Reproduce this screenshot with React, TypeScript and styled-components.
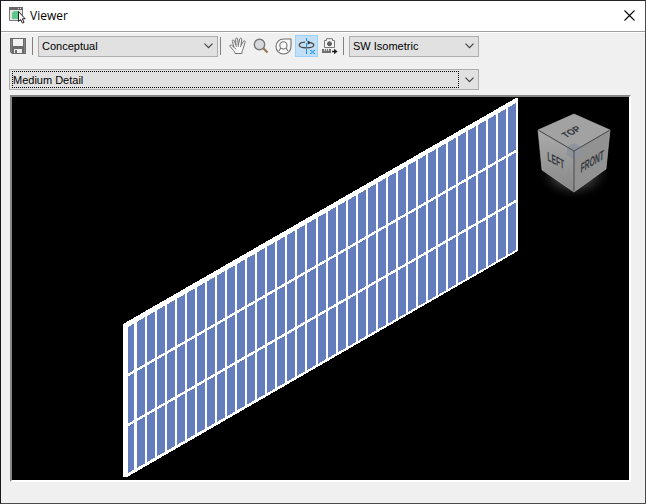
import React from "react";
import styled, { createGlobalStyle } from "styled-components";

const GlobalStyle = createGlobalStyle`
  * { box-sizing: border-box; }
  body { margin: 0; background: #f0f0f0; color: #000; font-family: "Liberation Sans", Arial, sans-serif; font-size: 11px; }
  svg { display: block; }
`;

const Window = styled.main`
  display: flex;
  flex-direction: column;
  min-height: 100vh;
  border: 1px solid #4c4a4d;
  border-left-color: #1b1718;
  border-top-color: #252329;
  background: #f0f0f0;
`;

const TitleBar = styled.header`
  display: flex;
  align-items: center;
  gap: 4px;
  height: 31px;
  padding-left: 8px;
  background: #fff;
  border-bottom: 1px solid #a0a0a0;
  box-shadow: 0 1px 0 #fff;
`;

const Title = styled.h1`
  flex: 1;
  margin: 0;
  font: 400 12px/16px "Open Sans", "Noto Sans", sans-serif;
`;

const CloseButton = styled.button`
  display: grid;
  place-items: center;
  width: 31px;
  height: 28px;
  margin-bottom: 2px;
  padding: 0;
  border: 0;
  background: transparent;
`;

const Toolbar = styled.div`
  display: flex;
  align-items: center;
  margin: 3px 0 0 5px;
  height: 22px;
`;

const ToolButton = styled.button<{ $active?: boolean }>`
  display: grid;
  place-items: center;
  flex: none;
  width: 23px;
  height: 22px;
  padding: 0;
  border: 1px solid ${(p) => (p.$active ? "#99d1ff" : "transparent")};
  background: ${(p) => (p.$active ? "#c2dff5" : "transparent")};
`;

const Separator = styled.span<{ $lead: number }>`
  flex: none;
  width: 1px;
  height: 18px;
  margin: 0 5px 0 ${(p) => p.$lead}px;
  background: #808080;
`;

const ViewTools = styled.div`
  display: flex;
`;

const Combo = styled.div<{ $width: number; $focused?: boolean }>`
  display: grid;
  align-items: center;
  width: ${(p) => p.$width}px;
  max-width: 100%;
  height: 21px;
  border: 1px solid #adadad;
  background: #e1e1e1;

  & > * { grid-area: 1 / 1; }

  &::after {
    content: "";
    grid-area: 1 / 1;
    display: ${(p) => (p.$focused ? "block" : "none")};
    height: 15px;
    margin: 0 19px 0 2px;
    border: 1px dotted #000;
    pointer-events: none;
  }
`;

const Select = styled.select`
  appearance: none;
  width: 100%;
  height: 19px;
  padding: 0 20px 0 3px;
  border: 0;
  outline: 0;
  background: transparent;
  color: #000;
  font: 11px "Liberation Sans", Arial, sans-serif;
`;

const Chevron = styled.svg`
  justify-self: end;
  margin-right: 4px;
  pointer-events: none;
`;

const DetailRow = styled.div`
  display: flex;
  margin: 12px 8px 0;
`;

const Viewport = styled.section`
  position: relative;
  flex: 1;
  display: grid;
  margin: 5px 14px 21px 9px;
  border: 2px solid;
  border-color: #868686 #fff #fff #868686;
  background: #000;
  overflow: hidden;
`;

const Scene = styled.svg`
  width: 100%;
  height: 100%;
`;

const ViewCube = styled.svg`
  position: absolute;
  top: 12px;
  right: 8px;
`;

function Dropdown({ label, width, value, options, focused }: {
  label: string; width: number; value: string; options: string[]; focused?: boolean;
}) {
  return (
    <Combo $width={width} $focused={focused}>
      <Select aria-label={label} defaultValue={value}>
        {options.map((o) => <option key={o}>{o}</option>)}
      </Select>
      <Chevron width="9" height="6" viewBox="0 0 9 6" fill="none" stroke="#444" strokeWidth="1.2">
        <path d="M.5 .7 4.5 4.7 8.5 .7" />
      </Chevron>
    </Combo>
  );
}

const AppIcon = () => (
  <svg width="17" height="18" viewBox="0 0 17 18">
    <path d="M.5 1.5h13v12H.5z" fill="#e6e6e6" stroke="#777" />
    <path d="M0 0h14v3H0z" fill="#686868" />
    <path d="M9 1h1v1H9zM11 1h1v1h-1z" fill="#ddd" />
    <path d="M3 6l2-2h5v8H3z" fill="#5fc78b" />
    <path d="M9.5 4.5v10l2.2-2 1.7 3.6 1.7-.8-1.7-3.5h2.8z" fill="#fff" stroke="#222" />
  </svg>
);

const SaveIcon = () => (
  <svg width="16" height="16" viewBox="0 0 16 16">
    <path d="M0 0h16v16H2l-2-2z" fill="#6b6b6b" />
    <path d="M3 1h10v7H3z" fill="#f3f3f3" />
    <path d="M4 11h8v4H4z" fill="#eee" />
    <path d="M5 12h2v3H5z" fill="#6b6b6b" />
    <path d="M1 1h1v13H1zM14 1h1v14h-1z" fill="#858585" />
  </svg>
);

const HandIcon = () => (
  <svg width="18" height="18" viewBox="0 0 18 18" fill="#f8f8f8" stroke="#707070" strokeLinejoin="round">
    <path d="M6 16.5c-.2-1.7-1-2.5-2-3.6L1.2 9.6C.3 8.4 1.5 7.4 2.7 8.3L5 10.2 3.3 4.3c-.4-1.4 1.3-1.9 1.8-.6L7 8.1 6.6 2.2C6.5.7 8.4.6 8.6 2l.7 5.8L10.8 2c.4-1.4 2.2-1 1.9.4L12 8.5l2.4-4.2c.7-1.2 2.2-.4 1.7.9l-2 6.6c-.4 1.4-1.2 2.2-1.3 4.7z" />
    <path d="M5 10.2l2 2M7 8.1l.4 1.7M9.3 7.8v2M12 8.5l-.6 1.6" fill="none" />
  </svg>
);

const ZoomIcon = () => (
  <svg width="16" height="16" viewBox="0 0 16 16">
    <circle cx="6.5" cy="6.5" r="5.2" fill="#d6d9da" stroke="#777" strokeWidth="1.4" />
    <path d="M10.3 10.3l4.2 4.2" stroke="#9c7650" strokeWidth="2.2" />
  </svg>
);

const WheelIcon = () => (
  <svg width="17" height="17" viewBox="0 0 17 17" fill="none" stroke="#707070" strokeWidth="1.1">
    <path d="M16 1v7.5A7.5 7.5 0 1 1 8.5 1z" fill="#f8f8f8" />
    <circle cx="8.4" cy="7.4" r="3.6" />
    <path d="M5.8 10l-2 3M11 10l2 3" />
  </svg>
);

const OrbitIcon = () => (
  <svg width="19" height="18" viewBox="0 0 19 18" fill="none">
    <path d="M9.5 1v3M9.5 6v4M9.5 12v5" stroke="#1191ed" />
    <path d="M8 5.2C4.2 5.5 2.2 6.7 2.2 8.1c0 1.6 3.1 2.8 7.3 2.8s7.3-1.2 7.3-2.8c0-1.1-1.2-2-3.5-2.5" stroke="#444" strokeWidth="1.2" />
    <path d="M10.5 3.4 14.2 5.5l-3.4 2.2z" fill="#333" />
    <path d="M14 13.5l3 3m0-3-3 3M13 13.5h1.5m2 0h1.5m-5 3h1.5m2 0h1.5" stroke="#1191ed" />
  </svg>
);

const CameraIcon = () => (
  <svg width="17" height="17" viewBox="0 0 17 17" fill="none">
    <path d="M3.5 9.5h10v-7h-2V.7h-6v1.8h-2z" fill="#f4f4f4" stroke="#777" />
    <circle cx="8.5" cy="5.8" r="2" fill="#666" stroke="#555" />
    <path d="M1 11h9v4H1z" fill="#707070" />
    <path d="M3.5 11v2m2-2v2m2-2v2" stroke="#ddd" />
    <path d="M11 13.5h3" stroke="#222" strokeWidth="1.5" />
    <path d="M13 10.8 16.7 13.5 13 16.2z" fill="#222" />
  </svg>
);

const mullions = Array.from({ length: 37 }, (_, i) => 133 + Math.round(i * 10.03));

const CurtainWall = () => (
  <Scene viewBox="0 0 617 383" shapeRendering="crispEdges" role="img" aria-label="Curtain wall model">
    <path d="M111 227 504 1h2v153L115 380h-4z" fill="#fff" />
    <path d="M116 230 504 6v147L116 376z" fill="#647dbd" />
    <rect x="122" y="224" width="3" height="150" fill="#fff" />
    {mullions.map((x) => (
      <rect key={x} x={x} y={Math.round(229 - (x - 116) * 0.577)} width="2" height="148" fill="#fff" />
    ))}
    <path d="M116 278 504 54M116 328 504 104" stroke="#fff" strokeWidth="2.4" />
  </Scene>
);

const Cube = () => (
  <ViewCube width="90" height="94" viewBox="0 0 90 94" role="img" aria-label="View cube">
    <defs>
      <radialGradient id="glow">
        <stop offset=".35" stopColor="#555" />
        <stop offset="1" stopColor="#000" stopOpacity="0" />
      </radialGradient>
      <linearGradient id="left" x2="0" y2="1">
        <stop stopColor="#aaa" /><stop offset="1" stopColor="#888" />
      </linearGradient>
    </defs>
    <ellipse cx="43" cy="65" rx="38" ry="26" fill="url(#glow)" />
    <path d="M43 5 79 21 43 42 7 21z" fill="#a2a2a2" />
    <path d="M7 21 43 42v41L11 61z" fill="url(#left)" />
    <path d="M79 21 43 42v41l32-23z" fill="#929292" />
    <path d="M36 38l7-4 7 4v8l-7 5-7-5z" fill="#8d929b" />
    <path d="M7 21 43 42 79 21M43 42v41" fill="none" stroke="#4b4b4b" />
    <path d="M7 21 43 5 79 21 75 60 43 83 11 61z" fill="none" stroke="#b5b5b5" strokeWidth=".6" />
    <g fill="#34383e" fontFamily="Liberation Sans" fontWeight="700" fontSize="13" textAnchor="middle">
      <text transform="matrix(.6 -.32 .62 .48 43 25)">TOP</text>
      <text transform="matrix(.52 .27 .04 1 25 56)">LEFT</text>
      <text transform="matrix(.52 -.32 -.04 1.05 61 57)">FRONT</text>
    </g>
  </ViewCube>
);

export default function App() {
  return (
    <>
      <GlobalStyle />
      <Window>
        <TitleBar>
          <AppIcon />
          <Title>Viewer</Title>
          <CloseButton aria-label="Close">
            <svg width="11" height="11" viewBox="0 0 11 11" stroke="#000" strokeWidth="1.1">
              <path d="M.5 .5l10 10M10.5 .5l-10 10" />
            </svg>
          </CloseButton>
        </TitleBar>
        <Toolbar role="toolbar" aria-label="View">
          <ToolButton aria-label="Save"><SaveIcon /></ToolButton>
          <Separator $lead={3} />
          <Dropdown label="Visual style" width={180} value="Conceptual" options={["Conceptual", "Realistic", "Wireframe"]} />
          <Separator $lead={2} />
          <ViewTools>
            <ToolButton aria-label="Pan"><HandIcon /></ToolButton>
            <ToolButton aria-label="Zoom"><ZoomIcon /></ToolButton>
            <ToolButton aria-label="Steering wheel"><WheelIcon /></ToolButton>
            <ToolButton aria-label="Orbit" aria-pressed="true" $active><OrbitIcon /></ToolButton>
            <ToolButton aria-label="Set view"><CameraIcon /></ToolButton>
          </ViewTools>
          <Separator $lead={2} />
          <Dropdown label="View direction" width={130} value="SW Isometric" options={["SW Isometric", "SE Isometric", "Top", "Front"]} />
        </Toolbar>
        <DetailRow>
          <Dropdown label="Display detail" width={470} value="Medium Detail" options={["Low Detail", "Medium Detail", "High Detail"]} focused />
        </DetailRow>
        <Viewport>
          <CurtainWall />
          <Cube />
        </Viewport>
      </Window>
    </>
  );
}
